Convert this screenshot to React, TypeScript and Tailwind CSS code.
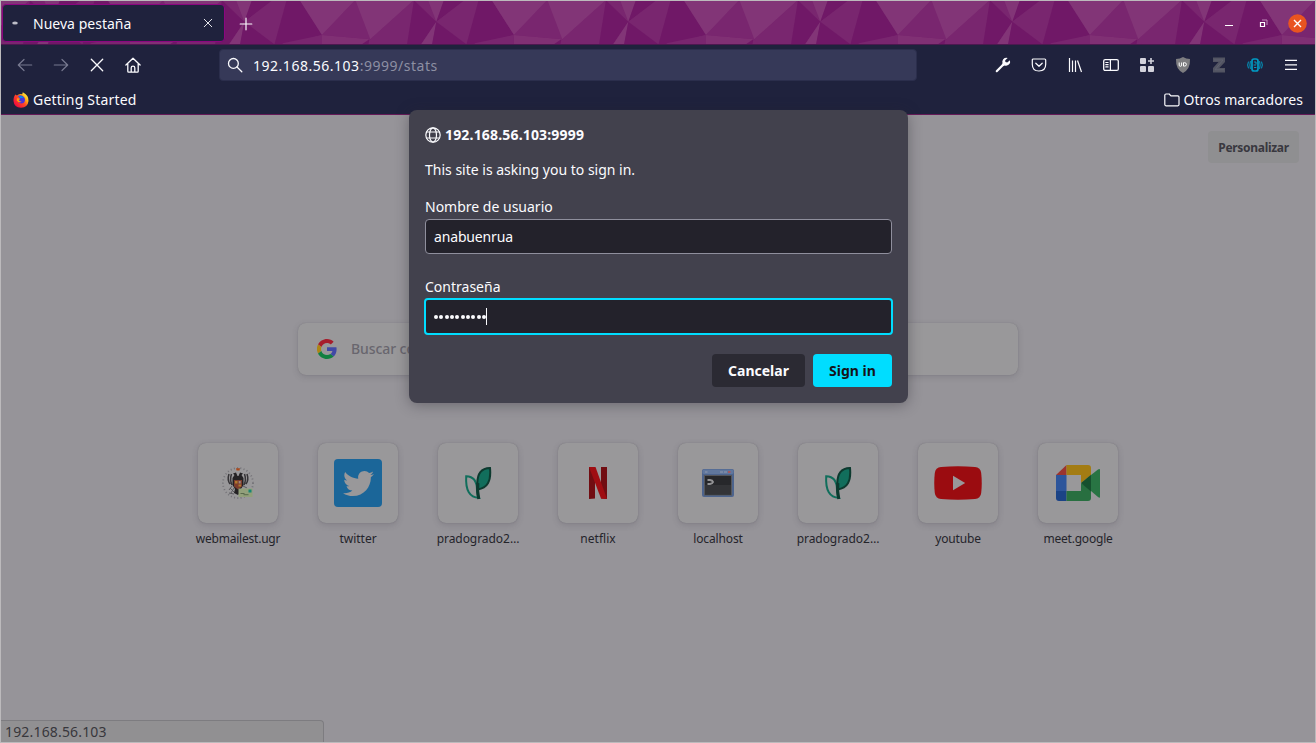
import type { ReactNode } from 'react';
import { FaTwitter } from 'react-icons/fa';

const TILES = [-3, -2, -1, 0, 1, 2, 3, 4];

function ThemeTile({ index }: { index: number }) {
  return (
    <g transform={`translate(${439 + index * 192} -1) scale(0.33333)`}>
      <path fill="#823577" d="M155 0H322L222 105z" />
      <path fill="#79266f" d="M322 0L222 105L367 118z" />
      <path fill="#823577" d="M322 0H498L367 118z" />
      <path fill="#79266f" d="M498 0L367 118L380 135H477z" />
      <path fill="#701867" d="M498 0L477 135H518L565 65z" />
      <path fill="#79266f" d="M498 0H540L565 65z" />
      <path fill="#823577" d="M540 0H588L565 65z" />
      <path fill="#701867" d="M588 0H655L565 65z" />
      <path fill="#79266f" d="M650 0H692L655 135L565 65z" />
      <path fill="#701867" d="M692 0H731L798 105L680 135H655z" />
      <path fill="#823577" d="M565 65L518 135H552z" />
      <path fill="#701867" d="M565 65L552 135H658z" />
      <path fill="#79266f" d="M798 105L680 130V135H798z" />
      <path fill="#803074" d="M798 105V135H915L943 118z" />
      <path fill="#701867" d="M915 135L940 118L937 135z" />
    </g>
  );
}

function Glyph({ children, size = 16, className = 'text-[#fbfbfe]' }: { children: ReactNode; size?: number; className?: string }) {
  return (
    <svg width={size} height={size} viewBox="0 0 16 16" fill="none" stroke="currentColor" strokeWidth="1.2" strokeLinecap="round" strokeLinejoin="round" className={`shrink-0 ${className}`}>
      {children}
    </svg>
  );
}

function ToolButton({ children }: { children: ReactNode }) {
  return <button className="flex h-8 w-9 items-center justify-center">{children}</button>;
}

function TitleBar() {
  return (
    <header className="relative h-[44px] shrink-0 overflow-hidden bg-[#79266f]">
      <svg className="absolute inset-0" width="1314" height="44">
        {TILES.map((i) => (
          <ThemeTile key={i} index={i} />
        ))}
        <rect y="43" width="1314" height="1" fill="#4d1850" />
      </svg>
      <div className="relative flex h-full items-start pt-[3px] pl-[1px]">
        <div className="flex h-[38px] w-[223px] items-center rounded-[4px] border border-[#8b0680] bg-[#1f223d] pr-[10px] pl-[9px]">
          <svg width="6" height="4" viewBox="0 0 6 4" className="shrink-0">
            <ellipse cx="3" cy="2" rx="2.8" ry="1.5" fill="#bdbdc8" />
          </svg>
          <span className="ml-[15px] flex-1 text-[14px] tracking-[0.02px] text-[#fbfbfe]">Nueva pestaña</span>
          <Glyph size={12}>
            <path d="M3 3l10 10M13 3L3 13" />
          </Glyph>
        </div>
        <div className="ml-[13px] flex h-[40px] items-center">
          <Glyph>
            <path strokeWidth="1.2" d="M8 2.200v11.600M2.200 8h11.600" />
          </Glyph>
        </div>
        <div className="ml-auto flex h-[38px] items-center pr-[8px]">
          <svg width="8" height="8" className="mr-[26px]">
            <path d="M0 6.500h8" stroke="#fff" strokeWidth="1" />
          </svg>
          <svg width="9" height="9" className="mr-[20px]" fill="none">
            <path d="M3 1h5v5" stroke="#bd88b8" />
            <path d="M1.500 3.500h4v4h-4z" stroke="#fff" strokeWidth="1.200" />
          </svg>
          <svg width="19" height="19" viewBox="0 0 19 19">
            <circle cx="9.5" cy="9.5" r="9.3" fill="#e95420" />
            <path d="M6 6l7 7M13 6l-7 7" stroke="#fff" strokeWidth="1.4" />
          </svg>
        </div>
      </div>
    </header>
  );
}

function FirefoxIcon() {
  return (
    <svg width="16" height="16" viewBox="0 0 16 16" className="shrink-0">
      <defs>
        <linearGradient id="ff" x1="0.9" y1="0.1" x2="0.15" y2="0.8">
          <stop offset="0" stopColor="#fff44f" />
          <stop offset="0.3" stopColor="#ffb013" />
          <stop offset="0.55" stopColor="#ff4a27" />
          <stop offset="1" stopColor="#f0103c" />
        </linearGradient>
      </defs>
      <path fill="url(#ff)" d="M1 5L2.200 2.500L4 3.500Q6 1.200 9.200 2.200L9.800 .2Q15.800 3.200 15.500 9Q14.800 15.500 8 15.800Q1 15.300 .5 9Q.4 7 1 5z" />
      <path fill="#4a34d8" d="M5 4Q8.500 2.300 11.200 5.200Q13 8 10.800 10.800Q7.700 12.500 5.300 9.700L7.700 9.800Q5 8.800 4.400 7.300L6.800 6.500z" />
      <path fill="#0090ed" d="M5.500 4.300Q8.700 3 10.800 5.700L7.400 6.200z" />
      <path fill="#ff980e" d="M4 6.200l3 .3-.4 1.100-1 .8 3.200 1.600-3.300.3-1.800-1.800z" />
    </svg>
  );
}

function Toolbars() {
  return (
    <div className="flex h-[70px] shrink-0 flex-col border-b border-[#651a58] bg-[#1f223d]">
      <div className="flex h-[40px] items-center pr-[6px] pl-[6px]">
        <ToolButton>
          <Glyph className="text-[#777990]"><path d="M14.700 8H1.500M7 2.500L1.300 8L7 13.500" /></Glyph>
        </ToolButton>
        <ToolButton>
          <Glyph className="text-[#777990]"><path d="M1.300 8h13.200M9 2.500L14.700 8L9 13.500" /></Glyph>
        </ToolButton>
        <ToolButton>
          <Glyph><path strokeWidth="1.3" d="M2.300 2.300l11.400 11.400M13.700 2.300L2.300 13.700" /></Glyph>
        </ToolButton>
        <ToolButton>
          <Glyph className="text-[#fbfbfe] -ml-px">
            <path strokeWidth="1.3" d="M.9 8L8 1.200L15.100 8M2.800 6.700v7.600q0 .9.9.9h8.600q.9 0 .9-.9V6.700M6.200 15v-4.200Q6.200 9.200 8 9.200t1.800 1.600V15" />
          </Glyph>
        </ToolButton>
        <div className="ml-[68px] flex h-[32px] w-[698px] items-center rounded-[4px] border border-[#2b2e4c] bg-[#363958] pl-[7px]">
          <Glyph>
            <circle cx="6.4" cy="6.4" r="4.9" strokeWidth="1.3" />
            <path strokeWidth="1.3" d="M10 10l4.800 4.800" />
          </Glyph>
          <span className="ml-[10px] text-[14px] tracking-[0.52px] text-[#fbfbfe]">
            192.168.56.103<span className="text-[#8d8fa3]">:9999/stats</span>
          </span>
        </div>
        <div className="ml-auto flex">
          <ToolButton>
            <svg width="16" height="16" viewBox="0 0 16 16" className="text-[#fbfbfe]">
              <path fill="currentColor" d="M12.700.9Q10 .3 8.200 2.200Q6.800 4 7.500 6.200L6.600 7.800L.9 13.600Q.4 14.400 1 15t1.500-.1L8.200 9.200L9.700 8.400Q12 9.200 13.900 7.600Q15.700 5.800 15 3.200L12.200 5.500L10.400 4.900L10.200 3.300z" />
            </svg>
          </ToolButton>
          <ToolButton>
            <Glyph><path strokeWidth="1.2" d="M2.300 2h11.400q1 0 1 1v4.300q0 6.700-6.700 6.700T1.300 7.300V3q0-1 1-1zM4.800 6.200L8 9.300l3.200-3.100" /></Glyph>
          </ToolButton>
          <ToolButton>
            <Glyph><path strokeLinecap="butt" strokeWidth="1.2" d="M2.500 1v14M5.500 3.500V15M8.500 3.500V15M10.500 3.500l4 11.500" /></Glyph>
          </ToolButton>
          <ToolButton>
            <Glyph><rect x=".7" y="2.600" width="14.600" height="10.800" rx="1.500" strokeWidth="1.3" /><path strokeWidth="1.200" d="M7.400 2.600v10.800M2.800 5.500h2.300M2.800 7.700h2.300M2.800 9.900h2.300" /></Glyph>
          </ToolButton>
          <ToolButton>
            <svg width="16" height="16" viewBox="0 0 16 16" fill="#d3d3dc">
              <rect x="1" y="1" width="6" height="6" rx="1" />
              <rect x="1" y="9" width="6" height="6" rx="1" />
              <rect x="9" y="9" width="6" height="6" rx="1" />
              <path d="M11.200 1h1.600v2.200H15v1.600h-2.200V7h-1.600V4.800H9V3.200h2.200z" />
            </svg>
          </ToolButton>
          <ToolButton>
            <svg width="16" height="16" viewBox="0 0 16 16">
              <path fill="#7d7d80" d="M8 0Q11 2 15 2Q15.500 12 8 16Q.5 12 1 2Q5 2 8 0z" />
              <path fill="none" stroke="#fff" strokeWidth="1" d="M4.200 5.500v2.700q0 1.100 1.200 1.100t1.200-1.100V5.500M8.500 5.700v3.400h1q1.900 0 1.900-1.700T9.500 5.700z" />
            </svg>
          </ToolButton>
          <ToolButton>
            <svg width="16" height="16" viewBox="0 0 16 16">
              <path fill="#525462" d="M2 .5h12v4.600L8.300 11H14v4.500H2v-4.600L7.500 5H2z" />
              <path fill="none" stroke="#626474" strokeWidth=".8" d="M3 3h9L4 12.800h9" />
            </svg>
          </ToolButton>
          <ToolButton>
            <svg width="16" height="16" viewBox="0 0 16 16" fill="none" stroke="#009cc5" strokeLinecap="round">
              <rect x="5" y="2" width="6" height="12" rx="2" strokeWidth="1.700" />
              <path strokeWidth="1" d="M7.500 5H9v2M7 8h1.500M7.500 10.500H9" />
              <path strokeWidth="1" d="M3.300 4.500Q2.400 8 3.300 11.500M12.700 4.500q.9 3.500 0 7M1.300 5Q-.1 8 1.300 11M14.700 5q1.400 3 0 6" />
            </svg>
          </ToolButton>
          <ToolButton>
            <Glyph><path strokeLinecap="butt" strokeWidth="1.200" d="M2 3.400h12M2 7.900h12M2 12.400h12" /></Glyph>
          </ToolButton>
        </div>
      </div>
      <div className="flex h-[29px] items-center justify-between pr-[12px] pl-[12px] text-[14px] text-[#fbfbfe]">
        <div className="flex items-center gap-[4px]">
          <FirefoxIcon />
          <span className="tracking-[0.2px]">Getting Started</span>
        </div>
        <div className="flex items-center gap-[4px]">
          <Glyph>
            <path d="M.8 12.600V3.200q0-1.200 1.200-1.200h3.200l1.700 1.800h6.900q1.200 0 1.200 1.200v7.600q0 1.200-1.200 1.200H2q-1.200 0-1.200-1.200z" />
          </Glyph>
          <span className="tracking-[0.06px]">Otros marcadores</span>
        </div>
      </div>
    </div>
  );
}

function GoogleIcon() {
  return (
    <svg width="20" height="20" viewBox="0 0 48 48">
      <path fill="#a61d2c" d="M24 9.500c3.500 0 6.600 1.200 9.100 3.600l6.800-6.800C35.900 2.400 30.400 0 24 0 14.600 0 6.500 5.400 2.600 13.200l8 6.200C12.400 13.700 17.700 9.500 24 9.500z" />
      <path fill="#4149a6" d="M47 24.500c0-1.600-.2-3.200-.4-4.500H24v9h12.900c-.6 3-2.200 5.500-4.800 7.200l7.700 6C44.400 38 47 31.800 47 24.500z" />
      <path fill="#ad8515" d="M10.500 28.600a14 14 0 010-9.200l-8-6.200a24 24 0 000 21.600z" />
      <path fill="#118040" d="M24 48c6.500 0 11.900-2.100 15.900-5.800l-7.700-6c-2.200 1.500-4.900 2.300-8.200 2.300-6.300 0-11.600-4.200-13.500-9.900l-8 6.200C6.500 42.600 14.600 48 24 48z" />
    </svg>
  );
}

function UgrIcon() {
  return (
    <svg width="34" height="34" viewBox="0 0 34 34">
      <circle cx="17" cy="17" r="15" fill="none" stroke="#747378" strokeWidth="1.800" strokeDasharray="1 2.300" />
      <path fill="none" stroke="#363437" strokeWidth="1.500" d="M8 8Q6 14 9 18M10.500 8Q8.500 14 11 19M26 8Q28 14 25 18M23.500 8Q25.500 14 23 19" />
      <path fill="none" stroke="#555358" strokeWidth=".9" d="M11 20l-3 4M13 22l-3 5M9 22l5 5M8 27l5 1M22 20l4 2" />
      <path fill="#242224" d="M16.500 10L15 6.500L12 7.500L13.500 9L11.500 12V19L14 23L13 27L17 29L20 26V23L22.500 19V12L20.500 9L22 7.500L19 6.500L17.500 10z" />
      <path fill="#7c3d2d" d="M13 14h8v6.500l-4 3-4-3z" />
      <path fill="#b07a2c" d="M14 15h2.500v2.500H14zM17.500 18.500H20v2h-2.500z" />
      <path fill="#a8491d" d="M15 2.200h4l-.5 2.300h-3z" />
      <path fill="#9c8581" d="M17.700 15h2v2.500h-2z" />
      <path fill="#92a07b" d="M17.500 22.500h14v8.500h-14z" />
      <path fill="#168674" d="M27.500 23.500h3v3h-3z" />
      <path stroke="#40513a" strokeWidth=".7" d="M19.500 27.500h4M22.500 28.700h5" />
    </svg>
  );
}

function LeafIcon() {
  return (
    <svg width="28" height="34" viewBox="0 0 28 34" fill="none">
      <path stroke="#116e5c" strokeWidth="2" d="M2.200 10.200Q13 10.500 13 24Q13.300 29 15 31.800Q1 31.500 2.200 10.200z" />
      <path fill="#116e5c" stroke="#0d3a2f" strokeWidth="2" d="M26 2Q13 2.300 13.400 18L13.700 23.400Q28 22 26 2z" />
      <path stroke="#0d3a2f" strokeWidth="3" d="M13.900 17Q13 26 14.800 33" />
    </svg>
  );
}

function NetflixIcon() {
  return (
    <svg width="18" height="32" viewBox="0 0 18 32">
      <path fill="#710d12" d="M0 0h6v31.500l-6 .5zM12 0h6v32l-6-.5z" />
      <path fill="#9f0d12" d="M0 0h6.500L18 32l-6-.6z" />
    </svg>
  );
}

function TerminalIcon() {
  return (
    <svg width="32" height="28" viewBox="0 0 32 28">
      <rect width="32" height="28" rx="2" fill="#4d648d" />
      <rect x=".5" y=".5" width="31" height="4.500" rx="1.500" fill="#60779d" />
      <path fill="#7888a5" d="M3 2h2.500v2H3zM18 2h3v2h-3zM22 2h3v2h-3z" />
      <path fill="#a45860" d="M26 2h2.500v2H26z" />
      <rect x="2" y="6" width="28" height="20.500" fill="#55575c" />
      <rect x="3" y="7" width="26" height="18.500" fill="#27282b" />
      <path fill="#333437" d="M3 16h26v9.500H3z" />
      <path fill="none" stroke="#929294" strokeWidth="2" d="M5.500 11h2.500q2.500.3 3 2-.5 1.700-3 2H5.500" />
    </svg>
  );
}

function YoutubeIcon() {
  return (
    <svg width="48" height="34" viewBox="0 0 48 34">
      <path fill="#9b0c10" d="M7 1Q24-.3 41 1Q46.500 1.500 47.200 7Q48.300 17 47.200 27Q46.500 32.500 41 33Q24 34.300 7 33Q1.500 32.500.8 27Q-.3 17 .8 7Q1.500 1.500 7 1z" />
      <path fill="#99989a" d="M19 9.800L31.200 17L19 24.200z" />
    </svg>
  );
}

function MeetIcon() {
  return (
    <svg width="44" height="36" viewBox="0 0 44 36">
      <path fill="#9b342e" d="M0 10L10.500 0V10z" />
      <path fill="#2d559b" d="M0 10h10.500v16H0z" />
      <path fill="#1b4386" d="M0 26h10.500v10H3q-3 0-3-3z" />
      <path fill="#a37c13" d="M10.500 0H32q3 0 3 3v7L25 18v-8H10.500z" />
      <path fill="#286f40" d="M10.500 26H25v-8l10 6v9q0 3-3 3H10.500z" />
      <path fill="#287443" d="M35 10l7-5.500Q44 3.300 44 5v27q0 1.500-2 0L35 26z" />
      <path fill="#16502e" d="M35 9.800L25 18L35 26.500z" />
    </svg>
  );
}

const SITES: { name: string; icon: ReactNode; tracking: string }[] = [
  { name: 'webmailest.ugr', icon: <UgrIcon />, tracking: '-tracking-[0.22px]' },
  {
    name: 'twitter',
    icon: (
      <div className="flex size-12 items-center justify-center rounded-[4px] bg-[#1b6699]">
        <FaTwitter size={31} color="#99989a" />
      </div>
    ),
    tracking: 'tracking-normal',
  },
  { name: 'pradogrado2…', icon: <LeafIcon />, tracking: '-tracking-[0.05px]' },
  { name: 'netflix', icon: <NetflixIcon />, tracking: 'tracking-[0.05px]' },
  { name: 'localhost', icon: <TerminalIcon />, tracking: '-tracking-[0.15px]' },
  { name: 'pradogrado2…', icon: <LeafIcon />, tracking: '-tracking-[0.05px]' },
  { name: 'youtube', icon: <YoutubeIcon />, tracking: '-tracking-[0.15px]' },
  { name: 'meet.google', icon: <MeetIcon />, tracking: '-tracking-[0.2px]' },
];

function NewTabPage() {
  return (
    <main className="flex flex-1 flex-col bg-[#969499]">
      <div className="flex justify-end pt-[16px] pr-[16px]">
        <button className="h-[32px] w-[91px] rounded-[4px] bg-[#8f8f91] pt-px text-[12px] font-bold text-[#39383f]">
          <span className="-tracking-[0.3px]">Personalizar</span>
        </button>
      </div>
      <div className="mt-[160px] ml-[297px] flex h-[52px] w-[720px] items-center rounded-[8px] bg-[#99989a] pl-[19px] shadow-[0_2px_6px_rgba(58,57,68,0.18),0_0_1px_rgba(58,57,68,0.3)]">
        <GoogleIcon />
        <span className="-mt-px ml-[14px] text-[14px] font-medium -tracking-[0.08px] text-[#68666e]">Buscar con Google o ingresar dirección</span>
      </div>
      <div className="mt-[68px] ml-[177px] flex">
        {SITES.map((site, i) => (
          <div key={i} className="flex w-[120px] flex-col items-center">
            <div className="flex size-20 items-center justify-center rounded-[8px] bg-[#99989a] shadow-[0_2px_6px_rgba(58,57,68,0.2),0_0_1px_rgba(58,57,68,0.4)]">
              {site.icon}
            </div>
            <span className={`mt-[7px] text-[12px] leading-[18px] text-[#25242b] ${site.tracking}`}>{site.name}</span>
          </div>
        ))}
      </div>
      <div className="mt-auto flex h-[22px] w-[323px] items-center rounded-tr-[4px] border-t border-r border-[#7d7c80] bg-[#919092] pl-[4px] text-[14px] tracking-[0.17px] text-[#38373c]">
        192.168.56.103
      </div>
    </main>
  );
}

function SignInDialog() {
  return (
    <section className="absolute top-[109px] left-[408px] flex h-[293px] w-[499px] flex-col rounded-[8px] bg-[#42414d] px-[16px] text-[14px] text-[#fbfbfe] shadow-[0_2px_14px_rgba(40,38,48,0.4)]">
      <h1 className="mt-[14px] flex h-[21px] items-center gap-[4px] font-bold">
        <Glyph>
          <circle cx="8" cy="8" r="7.200" />
          <ellipse cx="8" cy="8" rx="3.500" ry="7.200" />
          <path d="M1.700 5h12.600M1.700 11h12.600" />
        </Glyph>
        <span className="tracking-[0.17px]">192.168.56.103:9999</span>
      </h1>
      <p className="mt-[14px] h-[21px] leading-[21px]">This site is asking you to sign in.</p>
      <label className="mt-[16px] h-[21px] leading-[21px]">Nombre de usuario</label>
      <div className="mt-[2px] flex h-[35px] items-center rounded-[4px] border border-[#8f8f9d] bg-[#23222b] pl-[8px]">
        <span className="-tracking-[0.15px]">anabuenrua</span>
      </div>
      <label className="mt-[22px] h-[21px] leading-[21px]">Contraseña</label>
      <div className="-mx-px mt-px flex h-[37px] items-center rounded-[4px] border-2 border-[#00ddff] bg-[#23222b] pl-[8px]">
        <span className="flex gap-[1.330px]">
          {Array.from({ length: 10 }, (_, i) => (
            <span key={i} className="size-[4px] rounded-full bg-[#fbfbfe]" />
          ))}
        </span>
        <span className="h-[17px] w-px bg-[#fbfbfe]" />
      </div>
      <div className="mt-[19px] flex justify-end gap-[8px] font-bold">
        <button className="h-[33px] w-[93px] rounded-[4px] bg-[#2b2a33]">Cancelar</button>
        <button className="h-[33px] w-[79px] rounded-[4px] bg-[#00ddff] text-[#15141a]">Sign in</button>
      </div>
    </section>
  );
}

export default function App() {
  return (
    <div className="relative flex h-[743px] w-[1316px] flex-col overflow-hidden border border-[#bcbabc] font-['Noto_Sans',sans-serif]">
      <TitleBar />
      <Toolbars />
      <NewTabPage />
      <SignInDialog />
    </div>
  );
}
